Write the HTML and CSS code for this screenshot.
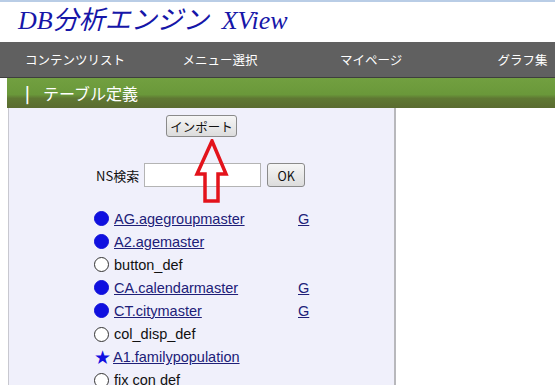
FILE: index.html
```html
<!DOCTYPE html>
<html lang="ja">
<head>
  <meta charset="UTF-8" />
  <title>DB分析エンジン XView</title>
  <link rel="stylesheet" href="styles.css">
</head>
<body>
  <header class="site-title">DB分析エンジン&nbsp; XView</header>
  <nav class="menu">
    <a href="#">コンテンツリスト</a>
    <a href="#">メニュー選択</a>
    <a href="#">マイページ</a>
    <a href="#">グラフ集</a>
  </nav>
  <div class="section-bar"><span class="bar-mark">|</span>テーブル定義</div>
  <div class="panel">
    <div class="import-row">
      <button class="btn btn-import">インポート</button>
    </div>
    <form class="search-row">
      <label>NS検索</label>
      <input type="text" class="search-input" />
      <button type="button" class="btn btn-ok">OK</button>
    </form>
    <ul class="table-list">
      <li><span class="dot on"></span><a href="#">AG.agegroupmaster</a><a class="g" href="#">G</a></li>
      <li><span class="dot on"></span><a href="#">A2.agemaster</a></li>
      <li><span class="dot"></span><span class="plain">button_def</span></li>
      <li><span class="dot on"></span><a href="#">CA.calendarmaster</a><a class="g" href="#">G</a></li>
      <li><span class="dot on"></span><a href="#">CT.citymaster</a><a class="g" href="#">G</a></li>
      <li><span class="dot"></span><span class="plain">col_disp_def</span></li>
      <li><span class="star">★</span><a href="#">A1.familypopulation</a></li>
      <li><span class="dot"></span><span class="plain">fix con def</span></li>
    </ul>
    <svg class="arrow" width="40" height="66" viewBox="0 0 40 66">
      <polygon points="21,2 35,35 27,35 27,62 14,62 14,35 6,35" fill="none" stroke="#e3131b" stroke-width="3.5" stroke-linejoin="miter" />
    </svg>
  </div>
</body>
</html>
```

FILE: styles.css
```css
body {
  margin: 0;
  background-color: #fff;
  border-top: 2px solid #b9cde6;
  font-family: "Liberation Sans", "Noto Sans CJK JP", sans-serif;
  overflow: hidden;
}
.site-title {
  height: 40px;
  padding-left: 18px;
  font-family: "Liberation Serif", "Noto Sans CJK JP", serif;
  font-style: italic;
  font-size: 26px;
  line-height: 38px;
  color: #1616a8;
  white-space: nowrap;
}
.menu {
  display: grid;
  grid-template-columns: repeat(4, 157.5px);
  height: 35px;
  align-items: center;
  overflow: hidden;
  background-color: #606060;
  border-bottom: 1px solid #3e3e3e;
  white-space: nowrap;
}
.menu a {
  padding-left: 25px;
  color: #fff;
  text-decoration: none;
  font-family: "Noto Sans CJK JP", sans-serif;
  font-size: 12.5px;
}
.section-bar {
  margin-left: 7px;
  height: 30px;
  display: flex;
  align-items: center;
  color: #fff;
  font-family: "Noto Sans CJK JP", sans-serif;
  font-size: 16px;
  background: linear-gradient(#72a040 0%, #6a983a 55%, #5f7833 68%, #5a6b30 100%);
}
.bar-mark {
  padding-left: 18px;
  width: 18px;
  font-weight: bold;
}
.panel {
  position: relative;
  margin-left: 8px;
  width: 385px;
  height: 277px;
  overflow: hidden;
  background-color: #f0f0fb;
  border-left: 1px solid #c8c8d0;
  border-right: 2px solid #b8b8bc;
}
.import-row {
  display: flex;
  justify-content: center;
  padding-top: 7px;
}
.btn {
  height: 22px;
  padding: 0;
  border: 1px solid #8a8a8a;
  border-radius: 3px;
  background: linear-gradient(#f6f6f6, #dcdcdc);
  font-family: "Noto Sans CJK JP", sans-serif;
  font-size: 12.5px;
  color: #111;
}
.btn-import {
  width: 71px;
}
.search-row {
  display: flex;
  align-items: center;
  margin: 26px 0 0 87px;
  font-family: "Noto Sans CJK JP", sans-serif;
  font-size: 13px;
  color: #111;
}
.search-row label {
  margin-right: 5px;
}
.search-input {
  width: 115px;
  height: 22px;
  padding: 0;
  border: 1px solid #b4b4b4;
  background-color: #fff;
}
.btn-ok {
  margin-left: 6px;
  width: 38px;
  height: 24px;
}
.table-list {
  list-style: none;
  margin: 20px 0 0 85px;
  padding: 0;
}
.table-list li {
  display: flex;
  align-items: center;
  height: 23.1px;
  font-size: 14.5px;
  white-space: nowrap;
}
.table-list a {
  color: #202078;
}
.plain {
  color: #111;
}
.dot {
  width: 13px;
  height: 13px;
  margin-right: 5px;
  border: 1px solid #333;
  border-radius: 50%;
  background-color: #fff;
}
.dot.on {
  border-color: #1010d8;
  background-color: #1010e0;
}
.star {
  width: 15px;
  margin-right: 4px;
  color: #1010e0;
  font-family: "DejaVu Sans", sans-serif;
  font-size: 19px;
  line-height: 1;
}
.table-list .g {
  position: absolute;
  left: 289px;
}
.arrow {
  position: absolute;
  left: 182px;
  top: 31px;
}
```
